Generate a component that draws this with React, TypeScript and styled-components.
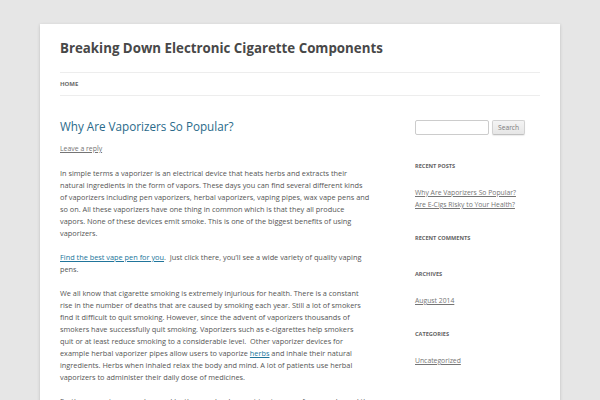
import React from 'react';
import styled, {createGlobalStyle} from 'styled-components';

const GlobalStyle = createGlobalStyle`
  html, body {
    margin: 0;
    padding: 0;
  }
  body {
    background: #e6e6e6;
    font-family: "Open Sans", Helvetica, Arial, sans-serif;
    color: #444;
  }
  a {
    color: #21759b;
  }
`;

const Site = styled.div`
  width: 480px;
  min-height: 420px;
  margin: 24px auto 0;
  padding: 0 20px;
  background: #fff;
  box-shadow: 0 1px 3px rgba(100, 100, 100, 0.3);
`;

const Header = styled.header`
  padding-top: 12px;

  > h1 {
    margin: 0;
    font-size: 13.3px;
    line-height: 24px;
    font-weight: bold;
    color: #484848;
  }
`;

const Nav = styled.nav`
  margin-top: 12px;

  > ul {
    list-style: none;
    margin: 0;
    padding: 0;
    border-top: 1px solid #ededed;
    border-bottom: 1px solid #ededed;
    display: flex;
    gap: 20px;
  }

  > ul > li {
    font-size: 6px;
    line-height: 22px;
    font-weight: bold;
    text-transform: uppercase;
    color: #6a6a6a;
  }
`;

const Main = styled.div`
  display: flex;
  justify-content: space-between;
  align-items: flex-start;
  padding-top: 24px;
`;

const Content = styled.main`
  width: 312px;
`;

const EntryHeader = styled.header`
  margin-bottom: 12px;

  > h1 {
    margin: 0;
    font-size: 11.7px;
    line-height: 12px;
    font-weight: normal;
    color: #2a6a8a;
  }

  > .comments-link {
    margin-top: 11px;
    font-size: 6.9px;
    line-height: 12px;

    a {
      color: #757575;
    }
  }
`;

// lines broken as in the original post
const Para = styled.p`
  margin: 0 0 12px;
  font-size: 7.35px;
  line-height: 12px;
  color: #555;
  white-space: nowrap;
`;

const Sidebar = styled.aside`
  width: 125px;
`;

const SearchForm = styled.form`
  display: flex;
  gap: 3px;
  margin-bottom: 23px;

  > input {
    width: 74px;
    height: 15px;
    box-sizing: border-box;
    border: 1px solid #ccc;
    border-radius: 2px;
    padding: 2px 4px;
    font-family: inherit;
    font-size: 7px;
  }

  > button {
    height: 15px;
    box-sizing: border-box;
    padding: 0 5px;
    font-family: inherit;
    font-size: 6.7px;
    color: #7c7c7c;
    background: linear-gradient(to bottom, #f4f4f4, #e6e6e6);
    border: 1px solid #d2d2d2;
    border-bottom-color: #c1c1c1;
    border-radius: 2px;
    box-shadow: 0 1px 1px rgba(64, 64, 64, 0.1);
  }
`;

const Widget = styled.section`
  margin-bottom: 19px;

  > h3 {
    margin: 0;
    font-size: 5.6px;
    line-height: 17px;
    font-weight: bold;
    text-transform: uppercase;
    color: #636363;
  }

  > ul {
    list-style: none;
    margin: 12px 0 0;
    padding: 0;
  }

  > ul > li {
    font-size: 6.8px;
    line-height: 12px;
  }

  > ul > li > a {
    color: #757575;
  }
`;

const widgets = [
  {title: 'Recent Posts', links: ['Why Are Vaporizers So Popular?', 'Are E-Cigs Risky to Your Health?']},
  {title: 'Recent Comments', links: []},
  {title: 'Archives', links: ['August 2014']},
  {title: 'Categories', links: ['Uncategorized']},
];

const App: React.FC = () => {
  return (
    <>
      <GlobalStyle/>
      <Site>
        <Header>
          <h1>Breaking Down Electronic Cigarette Components</h1>
          <Nav>
            <ul>
              <li>Home</li>
            </ul>
          </Nav>
        </Header>

        <Main>
          <Content>
            <article>
              <EntryHeader>
                <h1>Why Are Vaporizers So Popular?</h1>
                <div className="comments-link"><a href="#">Leave a reply</a></div>
              </EntryHeader>

              <Para>
                In simple terms a vaporizer is an electrical device that heats herbs and extracts their<br/>
                natural ingredients in the form of vapors. These days you can find several different kinds<br/>
                of vaporizers including pen vaporizers, herbal vaporizers, vaping pipes, wax vape pens and<br/>
                so on. All these vaporizers have one thing in common which is that they all produce<br/>
                vapors. None of these devices emit smoke. This is one of the biggest benefits of using<br/>
                vaporizers.
              </Para>
              <Para>
                <a href="#">Find the best vape pen for you</a>.&nbsp; Just click there, you’ll see a wide
                variety of quality vaping<br/>
                pens.
              </Para>
              <Para>
                We all know that cigarette smoking is extremely injurious for health. There is a constant<br/>
                rise in the number of deaths that are caused by smoking each year. Still a lot of smokers<br/>
                find it difficult to quit smoking. However, since the advent of vaporizers thousands of<br/>
                smokers have successfully quit smoking. Vaporizers such as e-cigarettes help smokers<br/>
                quit or at least reduce smoking to a considerable level.&nbsp; Other vaporizer devices for<br/>
                example herbal vaporizer pipes allow users to vaporize <a href="#">herbs</a> and inhale their natural<br/>
                ingredients. Herbs when inhaled relax the body and mind. A lot of patients use herbal<br/>
                vaporizers to administer their daily dose of medicines.
              </Para>
              <Para>
                Further, vaporizers are also used by the people who want to stay away from smoke and the<br/>
                world of tobacco.
              </Para>
            </article>
          </Content>

          <Sidebar>
            <SearchForm onSubmit={e => e.preventDefault()}>
              <input type="text"/>
              <button type="submit">Search</button>
            </SearchForm>
            {widgets.map(w =>
              <Widget key={w.title}>
                <h3>{w.title}</h3>
                {w.links.length > 0 &&
                  <ul>
                    {w.links.map(l => <li key={l}><a href="#">{l}</a></li>)}
                  </ul>}
              </Widget>
            )}
          </Sidebar>
        </Main>
      </Site>
    </>
  );
};

export default App;
